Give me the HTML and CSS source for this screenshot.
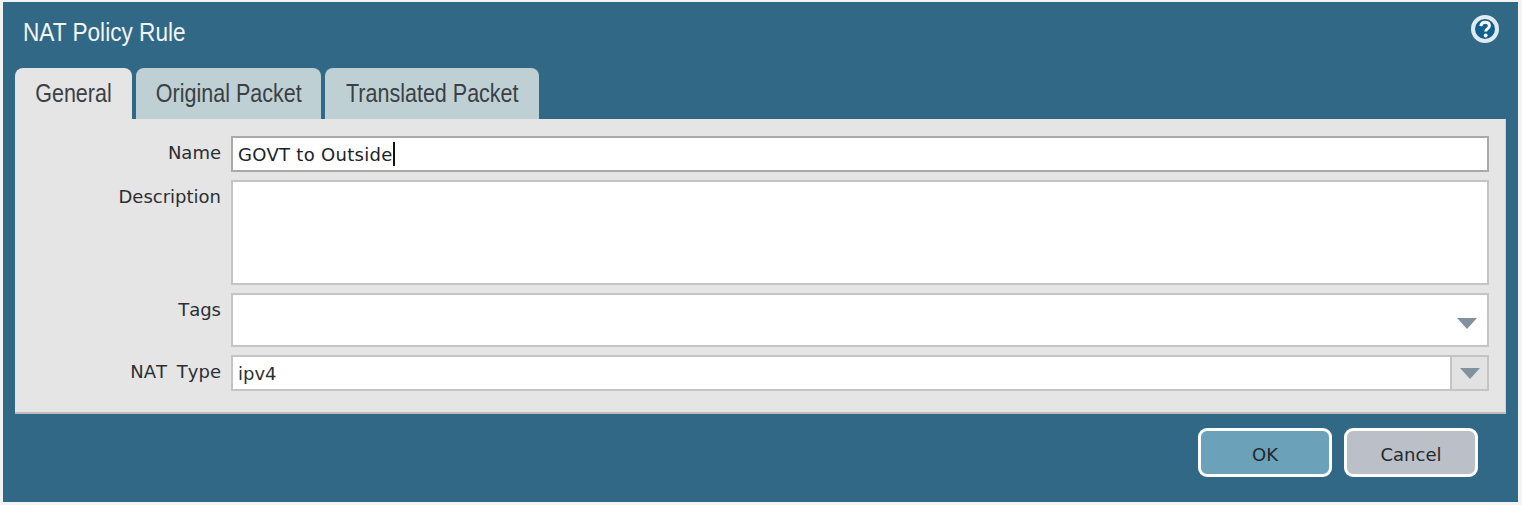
FILE: index.html
```html
<!DOCTYPE html>
<html lang="en">
<head>
    <meta charset="UTF-8">
    <title>NAT Policy Rule</title>
    <link rel="stylesheet" href="styles.css">
</head>
<body>

<div class="dialog">
    <div class="title-bar">
        <span class="title">NAT Policy Rule</span>
        <svg class="help-icon" width="30" height="30" viewBox="0 0 30 30">
            <circle cx="15" cy="15" r="12" fill="#11608f" stroke="#dfeaf1" stroke-width="4"/>
            <path d="M10.800 12.200c.3-2.600 2-3.900 4.400-3.900 2.500 0 4.200 1.400 4.200 3.500 0 1.500-.8 2.400-2.100 3.200-1.100.7-1.600 1.200-1.600 2.500" fill="none" stroke="#fff" stroke-width="3"/>
            <circle cx="15.700" cy="21.500" r="1.900" fill="#fff"/>
        </svg>
    </div>

    <div class="tabs">
        <div class="tab tab-general active"><span>General</span></div>
        <div class="tab tab-original"><span>Original Packet</span></div>
        <div class="tab tab-translated"><span>Translated Packet</span></div>
    </div>

    <div class="panel">
        <div class="row">
            <label>Name</label>
            <div class="field name-field">GOVT to Outside<span class="caret"></span></div>
        </div>
        <div class="row">
            <label>Description</label>
            <div class="field description-field"></div>
        </div>
        <div class="row">
            <label>Tags</label>
            <div class="field tags-field">
                <svg class="arrow" width="20" height="11" viewBox="0 0 20 11"><path d="M0 0h20L10 11z" fill="#7f929e"/></svg>
            </div>
        </div>
        <div class="row">
            <label>NAT Type</label>
            <div class="field select-field">
                <span class="select-value">ipv4</span>
                <span class="select-btn">
                    <svg class="arrow" width="20" height="11" viewBox="0 0 20 11"><path d="M0 0h20L10 11z" fill="#7f929e"/></svg>
                </span>
            </div>
        </div>
    </div>

    <div class="buttons">
        <button class="btn btn-ok">OK</button>
        <button class="btn btn-cancel">Cancel</button>
    </div>
</div>

</body>
</html>
```

FILE: styles.css
```css
body {
    margin: 0;
    height: 505px;
    overflow: hidden;
    background-color: #f2f3f3;
    font-family: "DejaVu Sans", sans-serif;
    color: #2b2f33;
}

.dialog {
    display: flex;
    flex-direction: column;
    height: 500px;
    margin: 2px 4px 3px 3px;
    padding: 0 12px;
    box-sizing: border-box;
    background-color: #316886;
}

.title-bar {
    display: flex;
    justify-content: space-between;
    align-items: center;
    height: 66px;
    padding: 0 0 6px 8px;
    box-sizing: border-box;
}

.title {
    font-family: "Liberation Sans", sans-serif;
    font-size: 25px;
    color: #f1f5f7;
    transform: scaleX(0.905);
    transform-origin: left center;
}

.help-icon {
    margin-right: 6px;
    margin-bottom: 6px;
}

/* tabs */
.tabs {
    display: flex;
    gap: 4px;
    height: 51px;
}

.tab {
    display: flex;
    align-items: center;
    justify-content: center;
    box-sizing: border-box;
    border-radius: 8px 8px 0 0;
    background-color: #bfd0d5;
    font-family: "Liberation Sans", sans-serif;
    font-size: 25px;
    color: #3a4044;
}

.tab span {
    transform: scaleX(0.86);
}

.tab-general {
    width: 117px;
}

.tab-original {
    width: 185px;
}

.tab-translated {
    width: 214px;
}

.tab.active {
    background-color: #e5e5e5;
}

/* form */
.panel {
    display: flex;
    flex-direction: column;
    gap: 8px;
    height: 295px;
    padding: 17px 16px 0 0;
    box-sizing: border-box;
    background-color: #e5e5e5;
    border-right: 1px solid #cfcfcf;
    border-bottom: 2px solid #bdbdbd;
}

.row {
    display: grid;
    grid-template-columns: 206px 1fr;
    column-gap: 10px;
}

label {
    padding-top: 6px;
    text-align: right;
    font-size: 18px;
    line-height: 22px;
    font-kerning: none;
    word-spacing: 4px;
}

.field {
    display: flex;
    align-items: center;
    box-sizing: border-box;
    border: 2px solid #c4c4c4;
    background-color: #fff;
    font-size: 18px;
}

.name-field {
    height: 36px;
    padding-left: 5px;
    border-color: #a9a9a9;
    letter-spacing: 0.3px;
    color: #1c2328;
}

.caret {
    width: 2px;
    height: 24px;
    background-color: #111;
}

.description-field {
    height: 105px;
}

.tags-field {
    justify-content: flex-end;
    height: 54px;
    padding: 6px 10px 0 0;
}

.select-field {
    height: 36px;
}

.select-value {
    flex: 1;
    padding-left: 5px;
}

.select-btn {
    display: flex;
    align-items: center;
    justify-content: center;
    box-sizing: border-box;
    width: 37px;
    height: 100%;
    border-left: 2px solid #c4c4c4;
    background-color: #e2e2e2;
}

/* footer */
.buttons {
    display: flex;
    justify-content: flex-end;
    gap: 12px;
    padding: 14px 28px 0 0;
}

.btn {
    width: 134px;
    height: 49px;
    padding-top: 4px;
    border: 3px solid #fff;
    border-radius: 9px;
    font-family: "DejaVu Sans", sans-serif;
    font-size: 18px;
    color: #23292e;
}

.btn-ok {
    background-color: #6ba1b9;
}

.btn-cancel {
    background-color: #bbbfc7;
}
```
